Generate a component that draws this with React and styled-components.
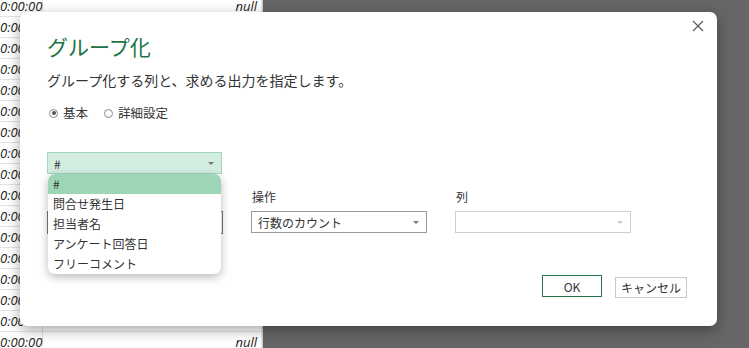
import React from "react";
import styled, { createGlobalStyle } from "styled-components";

const GlobalStyle = createGlobalStyle`
  html, body { margin: 0; padding: 0; }
  body {
    width: 749px;
    height: 348px;
    overflow: hidden;
    font-family: "Noto Sans CJK JP", "Noto Sans", sans-serif;
    color: #333;
  }
`;

const Screen = styled.div`
  position: relative;
  width: 749px;
  height: 348px;
  display: flex;
  background: #666;
  overflow: hidden;
`;

const Sheet = styled.div`
  width: 262px;
  background: #fff;
  border-right: 1px solid #d0d0d0;
  display: flex;
  flex-direction: column;
  margin-top: -4px;
`;

const SheetRow = styled.div`
  height: 21px;
  flex: none;
  display: grid;
  grid-template-columns: 43px 1fr;
  border-bottom: 1px solid #e3e3e3;
  box-sizing: border-box;
  font-family: "Open Sans", "Liberation Sans", sans-serif;
  font-style: italic;
  font-size: 13px;
  color: #222;
`;

const Cell = styled.div`
  display: flex;
  align-items: center;
  justify-content: ${(p) => (p.right ? "flex-end" : "flex-start")};
  padding: ${(p) => (p.right ? "0 4px" : "0")};
  border-right: 1px solid #e3e3e3;
  white-space: nowrap;
  background: ${(p) => (p.right ? "#fff" : "transparent")};
`;

const Dialog = styled.div`
  position: absolute;
  left: 20px;
  top: 12px;
  width: 697px;
  height: 314px;
  box-sizing: border-box;
  background: #fff;
  border-radius: 7px;
  box-shadow: 0 4px 14px rgba(0, 0, 0, 0.35);
  padding: 19px 27px 0;
  display: flex;
  flex-direction: column;
`;

const Close = styled.button`
  position: absolute;
  right: 11px;
  top: 6px;
  width: 16px;
  height: 16px;
  padding: 0;
  border: none;
  background: none;
  display: flex;
  align-items: center;
  justify-content: center;
`;

const Title = styled.h1`
  margin: 0;
  font-size: 21px;
  line-height: 30px;
  font-weight: 400;
  color: #217346;
`;

const Subtitle = styled.p`
  margin: 9px 0 0;
  font-size: 14px;
  line-height: 20px;
  color: #333;
`;

const RadioRow = styled.div`
  display: flex;
  gap: 14px;
  margin-top: 13px;
  font-size: 12.5px;
  line-height: 20px;
`;

const RadioLabel = styled.label`
  display: flex;
  align-items: center;
  gap: 5px;
`;

const RadioDot = styled.span`
  width: 9px;
  height: 9px;
  border-radius: 50%;
  border: 1px solid #8a8a8a;
  box-sizing: border-box;
  display: flex;
  align-items: center;
  justify-content: center;
  margin-left: 2px;
  &::after {
    content: "";
    width: 4px;
    height: 4px;
    border-radius: 50%;
    background: ${(p) => (p.checked ? "#555" : "transparent")};
  }
`;

const GroupSelect = styled.div`
  position: relative;
  margin-top: 29px;
  width: 175px;
`;

const Select = styled.div`
  height: 22px;
  box-sizing: border-box;
  display: flex;
  align-items: center;
  justify-content: space-between;
  padding: 0 7px 0 6px;
  font-size: 12px;
  background: ${(p) => (p.open ? "#d3ede1" : "#fff")};
  border: 1px solid
    ${(p) => (p.open ? "#a5d6bd" : p.disabled ? "#cfcfcf" : "#9a9a9a")};
  color: #333;
`;

const Arrow = styled.span`
  width: 0;
  height: 0;
  border-left: 3px solid transparent;
  border-right: 3px solid transparent;
  border-top: 3.5px solid ${(p) => (p.disabled ? "#c8c8c8" : "#777")};
`;

const Popup = styled.ul`
  position: absolute;
  left: 1px;
  top: 22px;
  width: 173px;
  margin: 0;
  padding: 0;
  list-style: none;
  background: #fff;
  border-radius: 7px;
  overflow: hidden;
  box-shadow: 0 3px 10px rgba(0, 0, 0, 0.28);
  z-index: 2;
`;

const Option = styled.li`
  height: 20px;
  line-height: 20px;
  padding-left: 5px;
  font-size: 12px;
  color: #333;
  background: ${(p) => (p.active ? "#9fd5b7" : "transparent")};
`;

const Fields = styled.div`
  display: grid;
  grid-template-columns: repeat(3, 176px);
  column-gap: 28px;
  margin-top: 14px;
`;

const Field = styled.div`
  display: flex;
  flex-direction: column;
  gap: 6px;
`;

const FieldLabel = styled.span`
  font-size: 12px;
  line-height: 17px;
  padding-left: 1px;
`;

const TextBox = styled.div`
  height: 23px;
  box-sizing: border-box;
  border: 1px solid #7a7a7a;
`;

const Footer = styled.div`
  display: flex;
  justify-content: flex-end;
  align-items: flex-start;
  gap: 13px;
  margin-top: 41px;
  padding-right: 3px;
`;

const Button = styled.button`
  height: ${(p) => (p.primary ? "22px" : "21px")};
  margin-top: ${(p) => (p.primary ? "0" : "2px")};
  width: ${(p) => (p.primary ? "60px" : "72px")};
  padding: 0;
  background: #fff;
  border: 1px solid ${(p) => (p.primary ? "#217346" : "#c8c8c8")};
  font-family: "Noto Sans CJK JP", "Noto Sans", sans-serif;
  font-size: 12px;
  color: #333;
`;

const items = ["#", "問合せ発生日", "担当者名", "アンケート回答日", "フリーコメント"];

export default function App() {
  const rows = Array.from({ length: 17 });
  return (
    <>
      <GlobalStyle />
      <Screen>
        <Sheet>
          {rows.map((_, i) => (
            <SheetRow key={i}>
              <Cell>0:00:00</Cell>
              <Cell right>null</Cell>
            </SheetRow>
          ))}
        </Sheet>
        <Dialog>
          <Close aria-label="close">
            <svg width="12" height="12" viewBox="0 0 12 12">
              <path d="M1 1 L11 11 M11 1 L1 11" stroke="#555" strokeWidth="1.1" />
            </svg>
          </Close>
          <Title>グループ化</Title>
          <Subtitle>グループ化する列と、求める出力を指定します。</Subtitle>
          <RadioRow>
            <RadioLabel>
              <RadioDot checked />
              基本
            </RadioLabel>
            <RadioLabel>
              <RadioDot />
              詳細設定
            </RadioLabel>
          </RadioRow>
          <GroupSelect>
            <Select open>
              <span>#</span>
              <Arrow />
            </Select>
            <Popup>
              {items.map((t, i) => (
                <Option key={t} active={i === 0}>
                  {t}
                </Option>
              ))}
            </Popup>
          </GroupSelect>
          <Fields>
            <Field>
              <FieldLabel>新しい列名</FieldLabel>
              <TextBox />
            </Field>
            <Field>
              <FieldLabel>操作</FieldLabel>
              <Select>
                <span>行数のカウント</span>
                <Arrow />
              </Select>
            </Field>
            <Field>
              <FieldLabel>列</FieldLabel>
              <Select disabled>
                <span />
                <Arrow disabled />
              </Select>
            </Field>
          </Fields>
          <Footer>
            <Button primary>OK</Button>
            <Button>キャンセル</Button>
          </Footer>
        </Dialog>
      </Screen>
    </>
  );
}
